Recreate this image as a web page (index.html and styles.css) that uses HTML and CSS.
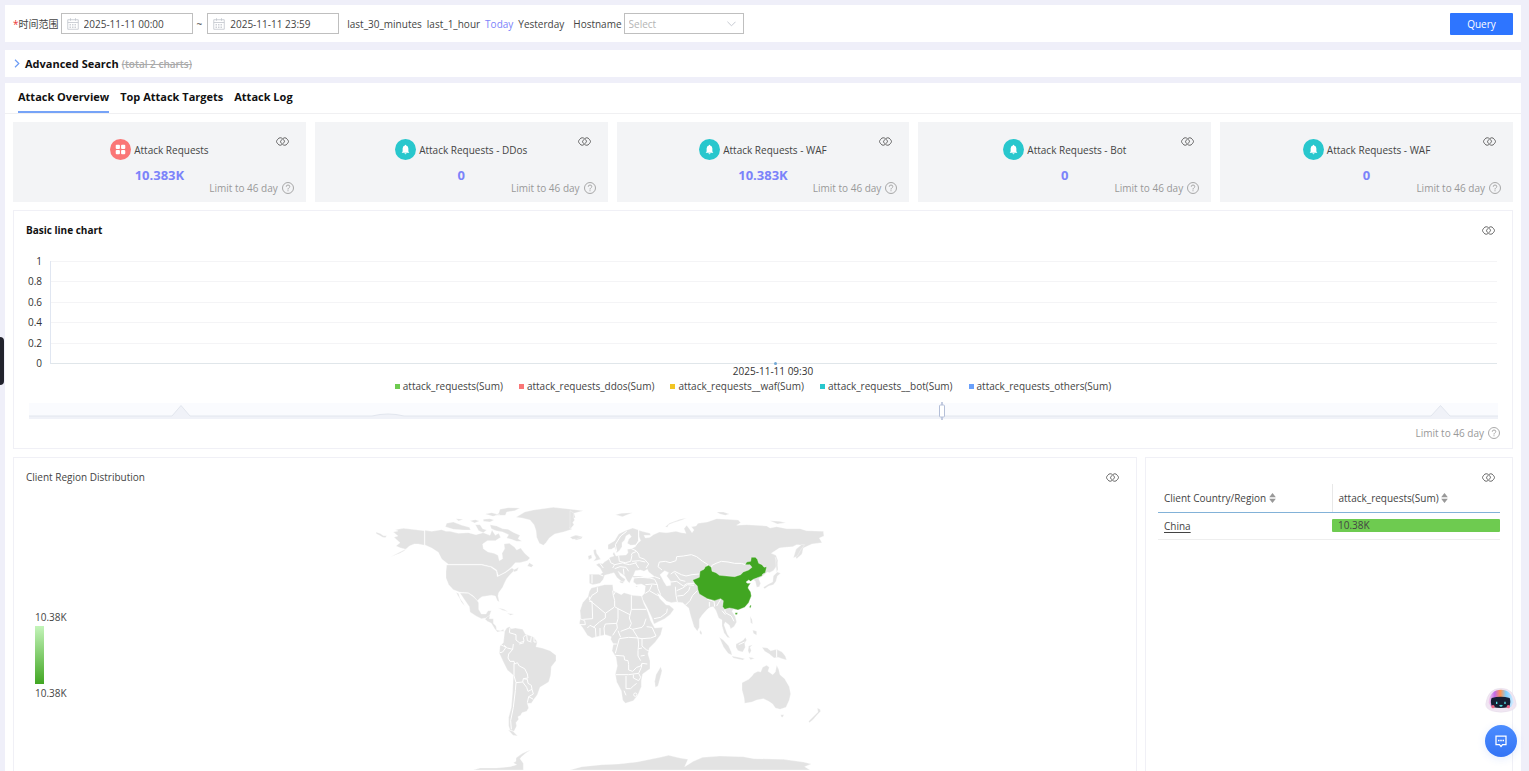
FILE: index.html
```html
<!DOCTYPE html>
<html lang="en">
<head>
<meta charset="utf-8">
<title>Attack Overview</title>
<link rel="stylesheet" href="styles.css">
</head>
<body>
<svg class="defs" aria-hidden="true">
  <symbol id="link" viewBox="0 0 26 18"><g fill="none" stroke="#555" stroke-width="1.8"><path d="M13 3.5Q11 1.500 8.500 1.500Q5.500 1.500 3.500 4.500Q1 7.500 1 9Q1 10.500 3.500 13.500Q5.500 16.500 8.500 16.500Q11.500 16.500 14 13Q17 10 17 8.500Q16.500 6 14.500 5"/><path d="M13 14.500Q15 16.500 17.500 16.500Q20.500 16.500 22.500 13.500Q25 10.500 25 9Q25 7.500 22.500 4.500Q20.500 1.500 17.500 1.500Q14.500 1.500 12 5Q9 8 9 9.500Q9.500 12 11.500 13"/></g></symbol>
  <symbol id="help" viewBox="0 0 24 24"><g fill="none" stroke="#999" stroke-width="1.7"><circle cx="12" cy="12" r="11"/><path d="M8.500 9.500Q8.500 6 12 6Q15.500 6 15.500 9Q15.500 11 13.500 12Q12 12.800 12 15M12 16.500V18.500"/></g></symbol>
  <symbol id="bell" viewBox="0 0 22 22"><circle cx="11" cy="11" r="11" fill="#28c7cd"/><path fill="#fff" d="M11 6q.7 0 .7.800Q14 7.500 14 10v3l.8 1v.5H7.200V14l.8-1v-3q0-2.500 2.300-3.200 0-.8.700-.8zM9.900 15h2.200q-.3.900-1.100.9t-1.100-.9z"/></symbol>
  <symbol id="grid" viewBox="0 0 22 22"><circle cx="11" cy="11" r="11" fill="#fa7676"/><g fill="#fff"><rect x="6" y="6" width="4.400" height="4.400" rx="1"/><rect x="11.600" y="6" width="4.400" height="4.400" rx="1"/><rect x="6" y="11.600" width="4.400" height="4.400" rx="1"/><rect x="11.600" y="11.600" width="4.400" height="4.400" rx="1"/></g></symbol>
  <symbol id="cal" viewBox="0 0 24 24"><g fill="none" stroke="#c0c4cc" stroke-width="1.600"><path d="M1.500 3.500h21v19h-21zM1.500 9h21M7 .5v5M17 .5v5"/><path stroke-dasharray="3 2" d="M5 13h14M5 16h14M5 19h14"/></g></symbol>
</svg>

<form class="bar filters">
  <label class="req" for="from">时间范围</label>
  <span class="date"><svg><use href="#cal"/></svg><input id="from" value="2025-11-11 00:00"></span>
  <span class="tilde">~</span>
  <span class="date"><svg><use href="#cal"/></svg><input aria-label="End time" value="2025-11-11 23:59"></span>
  <nav class="quick"><a href="#">last_30_minutes</a><a href="#">last_1_hour</a><a href="#" class="on">Today</a><a href="#">Yesterday</a></nav>
  <label for="host">Hostname</label>
  <span class="pick"><select id="host"><option>Select</option></select><svg viewBox="0 0 10 6"><path d="M.5.500 5 5 9.500.500" fill="none" stroke="#c0c4cc"/></svg></span>
  <button type="button" class="query">Query</button>
</form>

<section class="bar advanced">
  <svg viewBox="0 0 6 9"><path d="M1 .800 4.800 4.500 1 8.200" fill="none" stroke="#6c9cf5" stroke-width="1.200"/></svg>
  <h2>Advanced Search</h2><s>(total 2 charts)</s>
</section>

<main class="panel">
  <nav class="tabs"><a href="#" class="on">Attack Overview</a><a href="#">Top Attack Targets</a><a href="#">Attack Log</a></nav>
  <div class="content">
    <div class="stats">
      <article class="stat"><div class="mid"><h3><svg><use href="#grid"/></svg>Attack Requests</h3><b>10.383K</b></div><svg class="link"><use href="#link"/></svg><p class="limit">Limit to 46 day <svg><use href="#help"/></svg></p></article>
      <article class="stat"><div class="mid"><h3><svg><use href="#bell"/></svg>Attack Requests - DDos</h3><b>0</b></div><svg class="link"><use href="#link"/></svg><p class="limit">Limit to 46 day <svg><use href="#help"/></svg></p></article>
      <article class="stat"><div class="mid"><h3><svg><use href="#bell"/></svg>Attack Requests - WAF</h3><b>10.383K</b></div><svg class="link"><use href="#link"/></svg><p class="limit">Limit to 46 day <svg><use href="#help"/></svg></p></article>
      <article class="stat"><div class="mid"><h3><svg><use href="#bell"/></svg>Attack Requests - Bot</h3><b>0</b></div><svg class="link"><use href="#link"/></svg><p class="limit">Limit to 46 day <svg><use href="#help"/></svg></p></article>
      <article class="stat"><div class="mid"><h3><svg><use href="#bell"/></svg>Attack Requests - WAF</h3><b>0</b></div><svg class="link"><use href="#link"/></svg><p class="limit">Limit to 46 day <svg><use href="#help"/></svg></p></article>
    </div>

    <section class="card line">
      <header><h3>Basic line chart</h3><svg class="link"><use href="#link"/></svg></header>
      <div class="chart">
        <div class="axis"><span>1</span><span>0.8</span><span>0.6</span><span>0.4</span><span>0.2</span><span>0</span></div>
        <div class="plot"><i></i><i></i><i></i><i></i><i></i><em></em></div>
      </div>
      <div class="xlabel">2025-11-11 09:30</div>
      <ul class="legend"><li class="c1">attack_requests(Sum)</li><li class="c2">attack_requests_ddos(Sum)</li><li class="c3">attack_requests__waf(Sum)</li><li class="c4">attack_requests__bot(Sum)</li><li class="c5">attack_requests_others(Sum)</li></ul>
      <svg class="slider" viewBox="0 0 1469 18" preserveAspectRatio="none"><path fill="#fafbfe" d="M0 1h1469v16H0z"/><path fill="#f0f2f8" d="M0 14H143L152 3.500 161 14H343Q359 10 375 14H1402L1411.500 3.500 1421 14H1469V17H0z"/><path fill="none" stroke="#e2e6ee" d="M0 14H143L152 3.500 161 14H343Q359 10 375 14H1402L1411.500 3.500 1421 14H1469"/><path stroke="#c4cce0" stroke-width="2" d="M913 0v18"/><rect x="910.500" y="3" width="5" height="12" rx="1" fill="#fff" stroke="#b4bfd8"/></svg>
      <p class="limit">Limit to 46 day <svg><use href="#help"/></svg></p>
    </section>

    <div class="bottom">
      <section class="card region">
        <header><h3>Client Region Distribution</h3><svg class="link"><use href="#link"/></svg></header>
        <div class="geo">
          <div class="scale"><span>10.38K</span><i></i><span>10.38K</span></div>
          <svg class="map" viewBox="0 0 1410 828" role="img" aria-label="World map">
            <g class="land">
              <path d="M18 114l14 5 8 6 10 0-4 6-8-1-10-6-9-5zM70 114L84 111 76 107 100 103 120 105 163 110V154L145 150 133 150 118 156 108 166 92 162 78 156 90 146 72 130 84 126zM112 163l-10 8-12 7-28 10 28-14z"/>
              <path d="M165 109L185 112 215 107 228 112 240 112 265 118 295 116 318 122 340 116 360 124 366 108 376 124 386 118 392 130 376 140 352 140 338 150 340 164 354 174 372 178 384 184 388 200 398 194 396 178 404 164 402 150 418 148 434 160 440 168 452 162 464 178 480 192 472 200 450 206 436 206 424 220 405 235 385 245 380 228 365 218 335 211H235L215 195 205 175 185 162 165 153z"/>
              <path d="M230 213H335L362 219 379 231 382 248 406 236 426 222 434 228 420 242 410 254 404 266 398 280 386 296 384 306 388 324 382 320 376 306 364 304 350 306 336 308 328 314 322 320 310 306 295 296 270 295 250 287 236 272 228 252 228 232z"/>
              <path d="M270 297L295 298 310 308 320 318 326 326 326 346 334 360 348 360 354 350 364 350 358 366 348 372 334 374 318 366 300 354 298 338 284 318zM258 295l8 4 4 14 10 14 4 9-10-12-6-12z"/>
              <path d="M345 376L352 368 360 364 358 374 370 374 370 388 378 396 380 408 392 410 400 406 402 412 392 412 382 414 374 404 364 388 352 382z"/>
              <path d="M384 341l18 5 12 7-18-5zM412 358l20 2-10 4zM478 206l12 8-6 6-12-4zM430 228l16-8-4 10-10 4z"/>
              <path d="M230 88L250 84 276 94 298 100 302 108 280 108 250 106 226 98zM316 92L330 92 338 104 350 108 340 116 326 110zM360 92L380 96 398 104 414 106 432 116 450 124 444 134 456 142 440 142 424 136 410 132 416 122 398 114 378 110 364 104zM340 76l20-2 12 4-12 6-20-2zM300 80l16-3 12 4-14 6zM345 60l20-4 24 6-20 5zM258 74l22 2-14 5zM390 46l24-5 36 1-16 8-24 4-4 10-30 0 10-6z"/>
              <path d="M438 70L464 54 490 48 550 40 590 44 640 50 612 58 616 70 604 78 610 90 600 100 606 106 580 114 554 120 538 132 528 146 520 154 508 148 500 130 498 110 492 92 480 78 456 72zM608 130l12-6 18 4-4 6-16 5z"/>
              <path d="M404 412L410 402 418 398 424 404 436 402 458 406 466 420 492 430 502 444 498 458 516 462 540 470 558 484 558 500 544 518 542 544 536 564 510 580 502 602 492 616 484 628 472 628 476 642 470 652 456 656 452 664 444 668 446 676 438 686 440 696 432 712 420 708 416 696 416 670 424 640 428 590 430 544 412 528 400 504 388 478 390 456 400 446 402 430z"/>
              <path d="M415 708l14 4 14 14-14-2zM438 792Q456 776 482 768Q458 782 450 794L460 808V828H310L330 822 380 822 420 818 440 812 430 806 438 802z"/>
            </g>
            <g class="borders">
              <path d="M420 402L418 416 438 422 438 438 448 446 462 442 460 430 468 422M430 450L428 466 412 462 402 454M392 452L400 456 408 460 398 474 390 476M428 466L416 480 414 492 420 502 432 502 434 510 442 506 448 516 464 524 472 540 474 552 460 554 458 564 438 566 432 545 432 508M460 554L472 556 474 568 484 574 486 586 474 592 470 580 458 564M486 586L490 600 476 608 472 626M476 608L490 616M438 566L436 590 430 640 422 680 424 706M470 422L472 440 484 444M484 428L482 442M492 430L492 444 500 444M448 450L462 446"/>
            </g>
            <g transform="translate(600 0)">
              <g class="land">
                <path d="M58 241L90 241 98 236 90 222 78 212 88 207 98 209 104 203 116 196 120 190 132 186 128 180 132 174 138 186 152 184 168 183 174 176 172 166 184 164 196 158 200 150 212 140 206 126 204 108 216 112 240 118 242 124 222 124 226 132 240 130 250 122 268 114 290 116 318 112 334 116 348 118 342 104 350 94 358 104 366 116 372 108 364 98 378 96 384 88 412 84 440 74 470 76 505 78 512 86 500 94 530 92 560 94 590 96 600 102 620 98 650 104 690 104 710 110 760 112 762 126 748 132 756 146 726 150 700 162 696 180 680 194 674 184 684 166 700 154 680 152 668 158 646 160 628 162 604 178 618 184 624 200 622 214 610 230 598 236 592 234 578 246 566 254 572 268 568 278 560 280 556 262 548 256 536 258 528 264 540 270 532 280 542 294 544 306 536 326 524 340 504 348 490 346 486 352 496 368 500 384 492 398 482 404 478 394 466 384 462 392 472 420 480 432 472 430 462 416 456 396 456 378 446 372 438 350 430 338 420 340 412 346 396 364 388 376 388 400 382 412 372 398 362 366 356 342 346 334 338 326 318 324 304 326 290 322 272 304 262 298 270 314 280 324 288 332 298 334 312 346 300 362 284 374 252 390 246 372 232 342 218 316 216 306 224 298 226 276 214 270 200 272 190 264 192 252 188 248 184 256 178 268 170 258 164 246 150 236 144 232 152 246 166 256 162 264 154 262 140 250 132 236 118 240 104 244 100 256 90 268 80 270 68 272 58 268z"/>
                <path class="sea" d="M190 246L196 230 212 228 222 232 232 226 236 234 254 248 232 252 210 246zM270 242L284 230 296 236 290 246 302 262 302 274 290 276 282 264 276 252z"/>
                <path d="M114 166V152L134 140 146 120 166 110 188 102 206 108V140L198 152 182 154 172 148 176 136 184 128 178 120 168 126 164 138 156 146V158L148 170 140 176 134 160 124 166zM70 168L78 166 80 178 86 186 92 196 70 202 78 192 72 180zM54 186l10-4 2 10-10 5zM0 130l16-6 20 4-16 7-12 1zM0 50l12 8-2 12 4 8-6 8 4 6-12 14z"/>
                <path d="M64 282L88 276 104 272 128 272 130 290 154 302 162 296 188 304 214 306 222 330 232 350 242 380 254 402 278 400 272 422 256 444 238 462 234 480 240 500 240 524 218 540 214 560 214 578 204 602 190 620 166 628 158 618 154 590 140 564 136 540 142 516 138 490 126 470 130 450 122 436 124 428 106 422 90 426 66 432 52 424 40 404 28 388 32 370 30 350 38 326 54 308 58 292z"/>
                <path d="M272 518L276 530 272 546 264 576 256 580 254 562 258 542z"/>
                <path d="M390 407l6 10-2 6-5-6zM148 262l12 0 0 6-8-1zM196 276l8 0-4 3z"/>
                <path d="M448 430L460 438 476 456 484 474 486 484 474 478 460 458zM485 486L505 490 525 494 518 498 490 492zM498 450L506 446 520 438 526 430 530 438 524 448 526 460 518 474 504 470 498 460zM536 456L548 452 540 460 544 470 538 480 534 470zM536 489l18 4-12 4zM576 460L592 462 602 470 620 466 636 474 646 486 650 498 636 494 624 490 612 492 598 480 584 472zM540 366l6 10 2 14-6-4zM548 408l12 4 0 12-10-6z"/>
                <path d="M670 192L678 166 694 152 704 152 692 168 682 186zM616 190l6 14 2 22-4 10-2-22zM610 246L622 234 632 238 622 246 618 262 610 272 596 276 584 284 580 280 596 270 608 264z"/>
                <path d="M516 566L536 556 546 546 552 538 564 532 572 534 578 520 590 514 598 520 594 532 608 542 616 534 620 514 626 526 630 542 644 554 658 578 662 600 658 618 648 640 630 646 616 642 608 630 596 622 580 614 560 618 546 624 524 628 522 610 516 588zM632 662l10 0-4 8-4-1zM742 642L750 646 752 652 742 662 728 678 718 686 716 682 734 664 744 654z"/>
                <path d="M286 98L298 88 330 76 350 72 336 78 310 86 296 92 292 100zM136 62l18-4 34-2-20 8-10 4zM440 54l20 0 18 6-12 4-16-4zM600 80l28 2 20 4-26 4z"/>
                <path d="M0 828L36 818 96 812 146 810 200 804 230 798 270 790 296 784 330 792 354 796 344 818 370 802 398 790 450 786 520 788 552 794 640 796 700 804 724 810 704 818 720 828z"/>
              </g>
              <g class="borders">
                <path d="M206 108L206 140 198 154M184 164L198 170 206 180 208 190 224 196 236 210 228 222M200 172L186 178 184 184M264 218L268 204 286 202 300 206 318 200 320 188 340 186 364 182 380 188 398 202 414 212M264 218L276 228M302 240L314 232 334 242 348 246 366 242 388 240M414 212L402 226M438 208L454 202 474 204 494 208 514 208 526 212M438 208L426 214 424 222M302 264L320 262 340 276 352 268 374 268M314 236L330 258 346 262M320 290L338 282 352 272 372 274M316 278L318 304 322 324M322 306L340 304 356 290 360 278M346 334L360 320 368 304 382 290M190 252L210 250 240 252 254 256 262 272M254 248L270 254M226 272L248 270 262 272 264 284 272 302M226 298L238 290 246 272M238 290L262 304 270 306M252 374L272 370 290 356 292 344M412 316L432 322 434 338M418 324L418 338M452 316L440 336M464 346L466 356 484 366 492 382M456 350L466 362M118 194L122 206 134 212 128 222M146 186L148 202 166 206 182 202 186 184M134 212L160 206M160 208L178 212 200 206M150 218L168 220 176 232M134 224L150 218M160 224L162 242M196 206L206 222M88 206L100 222M66 242L66 268M88 241L100 246M186 202L208 200 226 204M140 172L136 152 152 126 170 112"/>
                <path d="M82 280L82 294 66 304 58 318V308M58 318L106 358 132 340M58 322L66 322 68 374 40 376M128 290L130 304 134 320 134 338 144 344M130 304L136 294M184 304V346H228M184 346L178 372 184 388M144 344L180 362M106 358L106 372 88 384 70 400M30 374L44 380 46 392 30 392M52 402L60 394 76 402 78 430M90 402L90 426M104 426L102 402 106 390 140 388 144 374 144 344M140 388L142 402 128 424M144 410L152 430M152 412L178 402 184 388M178 402L188 406 216 400 222 392 228 374M188 406L204 432 216 434 242 432 258 426 246 400 230 398M148 434L176 430 204 432 206 450 204 470 204 486 212 500M148 434L142 456 136 478M136 484L162 486 164 498 174 500 176 512M128 450L140 450M138 542L176 542 206 538M176 512L176 528 188 532 200 520 212 516 216 508M216 434L216 456 230 468 236 470M206 464L216 462M212 486L224 484M206 538L214 520 216 508 232 510M190 542L190 552 206 560 212 550 206 538M168 546L168 584 182 584 190 576 200 568M162 590L168 604"/>
                <circle cx="196" cy="602" r="5"/>
                <path d="M620 466V490M506 452L524 444"/>
              </g>
              <path class="china" d="M368 258L388 250 390 232 402 226 406 218 416 214 424 220 426 232 438 236 448 244 470 246 494 248 512 242 520 234 536 228 546 220 540 212 526 212 530 204 542 202 544 190 556 190 562 196 566 208 576 212 582 220 590 218 586 236 578 240 576 246 560 252 550 256 542 262 536 258 528 264 532 268 542 268 536 276 534 282 542 294 544 306 536 326 524 340 504 348 490 344 478 342 464 346 458 338 460 320 452 314 434 320 412 314 388 300 384 288 382 276 374 268zM496 356h7l-2 6-6-1zM541 333l3 2-3 8-3-4z"/>
            </g>
          </svg>
        </div>
      </section>
      <section class="card country">
        <header><svg class="link"><use href="#link"/></svg></header>
        <table>
          <thead><tr><th>Client Country/Region <svg viewBox="0 0 8 12"><path fill="#999" d="M0 5 4 0 8 5zM0 7h8l-4 5z"/></svg></th><th>attack_requests(Sum) <svg viewBox="0 0 8 12"><path fill="#999" d="M0 5 4 0 8 5zM0 7h8l-4 5z"/></svg></th></tr></thead>
          <tbody><tr><td><a href="#">China</a></td><td><div>10.38K</div></td></tr></tbody>
        </table>
      </section>
    </div>
  </div>
</main>

<button class="drawer" aria-label="Open drawer"></button>
<div class="float">
  <button aria-label="Assistant"><svg width="32" height="27" viewBox="0 0 96 81"><defs><linearGradient id="rb"><stop offset="0" stop-color="#f6d9ee"/><stop offset=".25" stop-color="#c46be8"/><stop offset=".48" stop-color="#ff9450"/><stop offset=".7" stop-color="#7fd0ff"/><stop offset="1" stop-color="#d8ecff"/></linearGradient></defs><path fill="#f0e6f2" stroke="#ddd3e4" d="M2 52Q8 4 48 4T94 52Q94 66 74 72Q48 80 22 72Q2 66 2 52z"/><path fill="url(#rb)" d="M10 46Q16 8 48 8T86 46L78 60H18z"/><path fill="#172033" d="M20 33Q47 25 74 33Q79 46 72 60Q47 66 22 60Q14 46 20 33z"/><path d="M35 44v7M60 44v7M44 55q4 4 8 0" stroke="#58e8e8" stroke-width="4" fill="none"/><circle cx="24" cy="59" r="5" fill="#ef6a8a"/><circle cx="70" cy="59" r="5" fill="#ef6a8a"/></svg></button>
  <button class="chat" aria-label="Chat"><svg width="12" height="13" viewBox="0 0 24 26"><path d="M2 2h20v17h-7l-3 4-3-4H2z" fill="none" stroke="#fff" stroke-width="2.500"/><path d="M6 11h3M10.500 11h3M15 11h3" stroke="#fff" stroke-width="3"/></svg></button>
</div>
</body>
</html>
```
FILE: styles.css
```css
* { box-sizing: border-box; }
body {
  margin: 0;
  padding: 5px 8px 0 5px;
  height: 100vh;
  overflow: hidden;
  display: flex;
  flex-direction: column;
  background: #efeff9;
  color: #444;
  font: 10px/14px "Open Sans", "Noto Sans", "Noto Sans CJK SC", sans-serif;
}
h2, h3, p, ul { margin: 0; padding: 0; font-size: inherit; }
a { color: inherit; text-decoration: none; }
button, input, select { font: inherit; color: inherit; border: 0; padding: 0; margin: 0; background: none; }
svg { display: block; flex: none; }
.defs { position: absolute; width: 0; height: 0; }

.bar { flex: none; display: flex; align-items: center; background: #fff; padding: 0 8px; }
.filters { height: 37px; margin-bottom: 8px; }
.req::before { content: "*"; color: #e33; }
.date { display: flex; align-items: center; gap: 5px; width: 132px; height: 21px; margin-left: 2px; padding-left: 5px; border: 1px solid #bfbfbf; }
.date svg { width: 12px; height: 12px; }
.date input { width: 100px; }
.tilde { margin: 0 3px 0 4px; }
.quick { display: flex; gap: 5px; margin: 0 9px 0 8px; }
.quick .on { color: #7b83fa; }
.pick { display: flex; align-items: center; width: 120px; height: 21px; margin-left: 2px; padding: 0 7px 0 4px; border: 1px solid #bfbfbf; color: #b4b4b4; }
.pick select { flex: 1; appearance: none; }
.pick svg { width: 9px; height: 6px; }
.query { width: 63px; height: 22px; margin-left: auto; border-radius: 1px; background: #2e75ff; color: #fff; }

.advanced { height: 27px; margin-bottom: 6px; font-size: 11px; }
.advanced svg { width: 6px; height: 9px; margin: 0 5px 0 1px; }
.advanced h2 { color: #111; margin-right: 3px; }
.advanced s { color: #aaa; font-size: 10px; font-weight: 600; }

.panel { flex: 1; min-height: 0; background: #fff; }
.tabs { display: flex; gap: 11px; padding: 0 13px; border-bottom: 1px solid #f0f0f2; color: #111; font-size: 11px; font-weight: 700; line-height: 28px; }
.tabs a { padding-bottom: 2px; }
.tabs .on { padding-bottom: 0; border-bottom: 2px solid #76a3f7; }
.content { display: flex; flex-direction: column; gap: 8px; padding: 8px; }

.stats { display: grid; grid-template-columns: repeat(5, 1fr); gap: 9px; }
.stat { display: grid; height: 80px; padding: 6px 12px 7px; background: #f3f4f6; }
.stat > * { grid-area: 1 / 1; }
.mid { display: flex; flex-direction: column; align-items: center; gap: 6px; padding-top: 11px; }
.mid h3 { display: flex; align-items: center; gap: 3px; font-weight: 400; }
.mid svg { width: 21px; height: 21px; }
.mid b { color: #7b83fa; font-size: 13px; line-height: 18px; }
.link { width: 13px; height: 9px; }
.stat .link { justify-self: end; margin: 9px 5px 0 0; }
.limit { display: flex; align-items: center; gap: 4px; place-self: end; color: #999; }
.limit svg { width: 12px; height: 12px; }

.card { border: 1px solid #f0f0f6; padding: 12px; }
.card header { display: flex; align-items: center; justify-content: space-between; height: 14px; }
.card header .link { margin: 1px 5px 0 auto; }
.line { padding-bottom: 8px; }
.line h3 { color: #111; line-height: 12px; }
.chart { display: flex; gap: 8px; margin: 17px 3px 0 0; height: 116px; }
.axis { display: flex; flex-direction: column; justify-content: space-between; align-items: flex-end; width: 16px; color: #333; }
.plot { position: relative; flex: 1; display: flex; flex-direction: column; margin: 7px 0 6px; border-left: 1px solid #e0e6f1; border-bottom: 1px solid #e0e6ea; }
.plot i { flex: 1; border-top: 1px solid #f4f4f6; }
.plot em { position: absolute; left: 50%; bottom: -2px; width: 3px; height: 3px; border-radius: 50%; background: #73a9d6; }
.xlabel { margin-top: -6px; padding-left: 20px; text-align: center; color: #333; }
.legend { display: flex; justify-content: center; gap: 16px; margin: 1px 20px 0 0; list-style: none; }
.legend li { display: flex; align-items: center; gap: 3px; }
.legend li::before { content: ""; width: 5px; height: 5px; background: #6ecb50; }
.legend .c2::before { background: #fa7676; }
.legend .c3::before { background: #f2c522; }
.legend .c4::before { background: #28c7cd; }
.legend .c5::before { background: #69a0fb; }
.slider { width: calc(100% - 5px); height: 18px; margin: 9px 0 0 3px; }
.line .limit { margin-top: 6px; justify-content: flex-end; }

.bottom { display: grid; grid-template-columns: 1124fr 368fr; gap: 8px; }
.region h3 { font-weight: 400; line-height: 12px; }
.region .card header .link { margin-right: 6px; }
.geo { display: flex; align-items: center; margin-top: 10px; }
.scale { width: 60px; margin-top: 46px; padding-left: 9px; }
.scale span, .scale i { display: block; }
.scale i { width: 9px; height: 58px; margin: 2px 0; background: linear-gradient(#c4f4ba, #41a622); }
.map { width: 470px; height: 276px; margin: 0 auto; }
.land { fill: #e3e3e3; stroke: #fff; stroke-width: 1; }
.land .sea { fill: #fff; }
.borders { fill: none; stroke: #fff; stroke-width: 3; stroke-linejoin: round; }
.china { fill: #41a622; stroke: #fff; stroke-width: 1; }

.country table { width: 100%; table-layout: fixed; border-collapse: collapse; }
.country th { height: 28px; padding: 0 6px; text-align: left; font-weight: 400; border-bottom: 1px solid #82b2d8; }
.country th + th { border-left: 1px solid #e8e8e8; }
.country th:first-child { width: 174px; }
.country th svg { display: inline-block; width: 7px; height: 10px; vertical-align: -1px; }
.country td { height: 27px; padding: 0 6px; border-bottom: 1px solid #eee; }
.country td a { text-decoration: underline; text-underline-offset: 2px; }
.country td + td { padding: 0; }
.country td div { padding-left: 6px; border-radius: 1px; background: #6ecb50; line-height: 13px; }

.drawer { position: fixed; left: 0; top: 337px; width: 4px; height: 48px; border-radius: 0 4px 4px 0; background: #22232d; }
.float { position: fixed; right: 12px; bottom: 14px; display: flex; flex-direction: column; align-items: center; gap: 11px; }
.chat { display: grid; place-items: center; width: 32px; height: 32px; border-radius: 50%; background: linear-gradient(#4b8cff, #3474f5); box-shadow: 0 2px 8px #3474f522; }
```
